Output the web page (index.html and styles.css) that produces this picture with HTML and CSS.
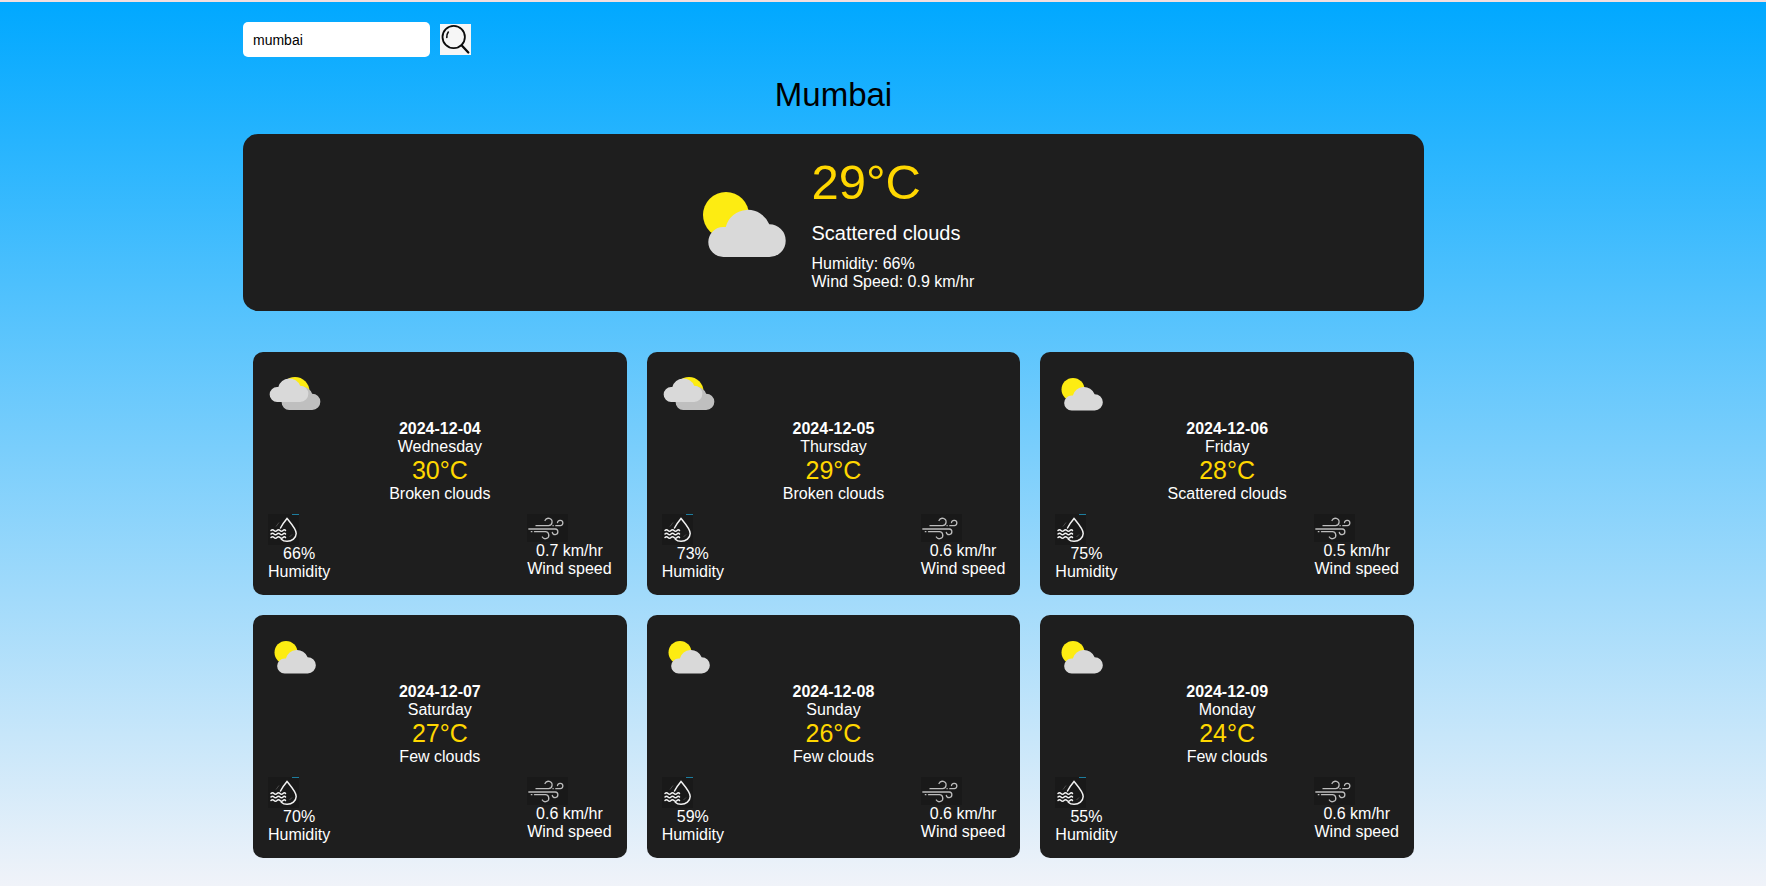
FILE: index.html
```html
<!DOCTYPE html>
<html lang="en">
<head>
<meta charset="utf-8">
<title>Weather forecast</title>
<link rel="stylesheet" href="styles.css">
</head>
<body>
<svg class="sprites" aria-hidden="true">
  <symbol id="cloud" viewBox="0 0 102 102"><path d="M33.3 85a15 15 0 0 1 0-30h2.4A23 23 0 0 1 79.3 52.3 16.3 16.3 0 0 1 79.4 85z"/></symbol>
  <symbol id="partly" viewBox="0 0 102 102">
    <circle cx="36" cy="43" r="23" fill="#fdec12"/>
    <use href="#cloud" width="102" height="102" fill="#d9d9d9"/>
  </symbol>
  <symbol id="broken" viewBox="0 0 102 102" overflow="visible">
    <circle cx="54" cy="47" r="29" fill="#fdec12"/>
    <use href="#cloud" x="9" y="-1" width="102" height="102" fill="#bfbfbf"/>
    <use href="#cloud" x="-15" y="-17" width="102" height="102" fill="#d9d9d9"/>
  </symbol>
  <symbol id="humidity" viewBox="0 0 31 31">
    <path fill="#191919" d="M0 0h31v31H0z"/>
    <path fill="#1d7d9e" d="M24 0h7v1h-7z"/>
    <g fill="none" stroke="#f2f2f2" stroke-width="1.5" stroke-linecap="round">
      <path d="M12.5 14C14.200 10.500 16.500 7.500 19 4.500c4.500 5.500 9.200 10.500 9.200 15a9 8 0 0 1-9.200 7.800c-2.600 0-4.400-.8-5.700-2.100"/>
      <path d="M3 16.500q1.500-1.600 3 0t3 0 3 0 3 0 2.500 0M3 20q1.500-1.600 3 0t3 0 3 0 3 0 2.500 0M3 23.500q1.500-1.600 3 0t3 0 3 0 3 0 2.500 0"/>
    </g>
    <path d="M8 12.500l3-4M21.500 23l2.500-2.500" stroke="#555" stroke-width=".8"/>
  </symbol>
  <symbol id="wind" viewBox="0 0 41 28">
    <path fill="#191919" d="M0 0h41v28H0z"/>
    <path fill="none" stroke="#bcbcbc" stroke-width="1.3" stroke-linecap="round" d="M9 11.700H21.500a3.700 3.700 0 1 0-3.500-5.200M26 11.700h.2M28.800 11.700H33.300a2.700 2.700 0 1 0-2.800-3.200M1.800 15H28.300a2.800 2.800 0 1 1-3 3.300M4.300 17.700h.6M7.500 17.700H18a3.500 3.500 0 1 1-2.700 5.300"/>
  </symbol>
</svg>
<main class="container">
  <form class="search">
    <input class="search-input" type="text" value="mumbai" aria-label="City">
    <button class="search-button" type="button" aria-label="Search">
      <svg class="search-icon" viewBox="0 0 31 31" fill="none" stroke="#0b0b0b" stroke-linecap="round">
        <circle cx="13.700" cy="13" r="11.200" stroke-width="1.800"/>
        <path stroke-width="2.300" d="M21.800 21.500l6.500 7"/>
        <path stroke-width="1.600" d="M6.800 13.500c0-2.500.4-4.200 1.500-5.500"/>
      </svg>
    </button>
  </form>
  <h1 class="city">Mumbai</h1>
  <section class="current">
    <svg class="current-icon"><use href="#partly"/></svg>
    <div class="current-info">
      <p class="current-temp">29°C</p>
      <p class="current-sky">Scattered clouds</p>
      <p>Humidity: 66%</p>
      <p>Wind Speed: 0.9 km/hr</p>
    </div>
  </section>
  <section class="forecast">
    <article class="day">
      <svg class="day-icon"><use href="#broken"/></svg>
      <h2 class="date">2024-12-04</h2><p>Wednesday</p><p class="temp">30°C</p><p>Broken clouds</p>
      <div class="stats">
        <div><svg class="humidity"><use href="#humidity"/></svg><p>66%</p><p>Humidity</p></div>
        <div><svg class="wind"><use href="#wind"/></svg><p>0.7 km/hr</p><p>Wind speed</p></div>
      </div>
    </article>
    <article class="day">
      <svg class="day-icon"><use href="#broken"/></svg>
      <h2 class="date">2024-12-05</h2><p>Thursday</p><p class="temp">29°C</p><p>Broken clouds</p>
      <div class="stats">
        <div><svg class="humidity"><use href="#humidity"/></svg><p>73%</p><p>Humidity</p></div>
        <div><svg class="wind"><use href="#wind"/></svg><p>0.6 km/hr</p><p>Wind speed</p></div>
      </div>
    </article>
    <article class="day">
      <svg class="day-icon"><use href="#partly"/></svg>
      <h2 class="date">2024-12-06</h2><p>Friday</p><p class="temp">28°C</p><p>Scattered clouds</p>
      <div class="stats">
        <div><svg class="humidity"><use href="#humidity"/></svg><p>75%</p><p>Humidity</p></div>
        <div><svg class="wind"><use href="#wind"/></svg><p>0.5 km/hr</p><p>Wind speed</p></div>
      </div>
    </article>
    <article class="day">
      <svg class="day-icon"><use href="#partly"/></svg>
      <h2 class="date">2024-12-07</h2><p>Saturday</p><p class="temp">27°C</p><p>Few clouds</p>
      <div class="stats">
        <div><svg class="humidity"><use href="#humidity"/></svg><p>70%</p><p>Humidity</p></div>
        <div><svg class="wind"><use href="#wind"/></svg><p>0.6 km/hr</p><p>Wind speed</p></div>
      </div>
    </article>
    <article class="day">
      <svg class="day-icon"><use href="#partly"/></svg>
      <h2 class="date">2024-12-08</h2><p>Sunday</p><p class="temp">26°C</p><p>Few clouds</p>
      <div class="stats">
        <div><svg class="humidity"><use href="#humidity"/></svg><p>59%</p><p>Humidity</p></div>
        <div><svg class="wind"><use href="#wind"/></svg><p>0.6 km/hr</p><p>Wind speed</p></div>
      </div>
    </article>
    <article class="day">
      <svg class="day-icon"><use href="#partly"/></svg>
      <h2 class="date">2024-12-09</h2><p>Monday</p><p class="temp">24°C</p><p>Few clouds</p>
      <div class="stats">
        <div><svg class="humidity"><use href="#humidity"/></svg><p>55%</p><p>Humidity</p></div>
        <div><svg class="wind"><use href="#wind"/></svg><p>0.6 km/hr</p><p>Wind speed</p></div>
      </div>
    </article>
  </section>
</main>
</body>
</html>
```
FILE: styles.css
```css
* { box-sizing: border-box; }

body {
  margin: 0;
  min-height: 100vh;
  padding: 20px 99px 26px 0;
  border-top: 2px solid #f3dfe0;
  background: linear-gradient(#00a8ff, #f0f3f9);
  font: 16px/18px "Liberation Sans", Arial, sans-serif;
  color: #fff;
}

h1, h2, p { margin: 0; font-weight: normal; }
svg { display: block; }

.sprites { display: none; }

.container {
  max-width: 1181px;
  margin: 0 auto;
}

.search {
  display: flex;
  align-items: center;
  gap: 10px;
}

.search-input {
  width: 187px;
  height: 35px;
  padding: 0 10px;
  border: 0;
  border-radius: 5px;
  background: #fff;
  color: #000;
  font: 14px "Liberation Sans", Arial, sans-serif;
}

.search-button {
  padding: 0;
  border: 0;
  background: #f6f6f6;
  cursor: pointer;
}

.search-icon { width: 31px; height: 31px; }

.city {
  margin: 19px 0 20px;
  color: #000;
  font-size: 33px;
  line-height: 38px;
  text-align: center;
}

.current {
  display: flex;
  justify-content: center;
  align-items: center;
  gap: 20px;
  padding: 20px;
  border-radius: 15px;
  background: #1e1e1e;
}

.current-icon { width: 102px; height: 102px; }
.current-info { min-width: 166px; }

.current-temp {
  margin-bottom: 11px;
  color: #ffd700;
  font-size: 49px;
  line-height: 56px;
}

.current-sky {
  margin-bottom: 10px;
  font-size: 20px;
  line-height: 24px;
}

.forecast {
  display: grid;
  grid-template-columns: repeat(3, 1fr);
  gap: 20px;
  margin-top: 41px;
  padding: 0 10px;
}

.day {
  padding: 16px 15px 14px;
  border-radius: 10px;
  background: #1e1e1e;
  text-align: center;
}

.day-icon { width: 51px; height: 51px; margin-bottom: 1px; overflow: visible; }
.date { font-size: 16px; font-weight: bold; line-height: 18px; }

.temp {
  color: #ffd700;
  font-size: 25px;
  line-height: 29px;
}

.stats {
  display: flex;
  justify-content: space-between;
  margin-top: 11px;
}

.humidity { width: 31px; height: 31px; }
.wind { width: 41px; height: 28px; }
```
